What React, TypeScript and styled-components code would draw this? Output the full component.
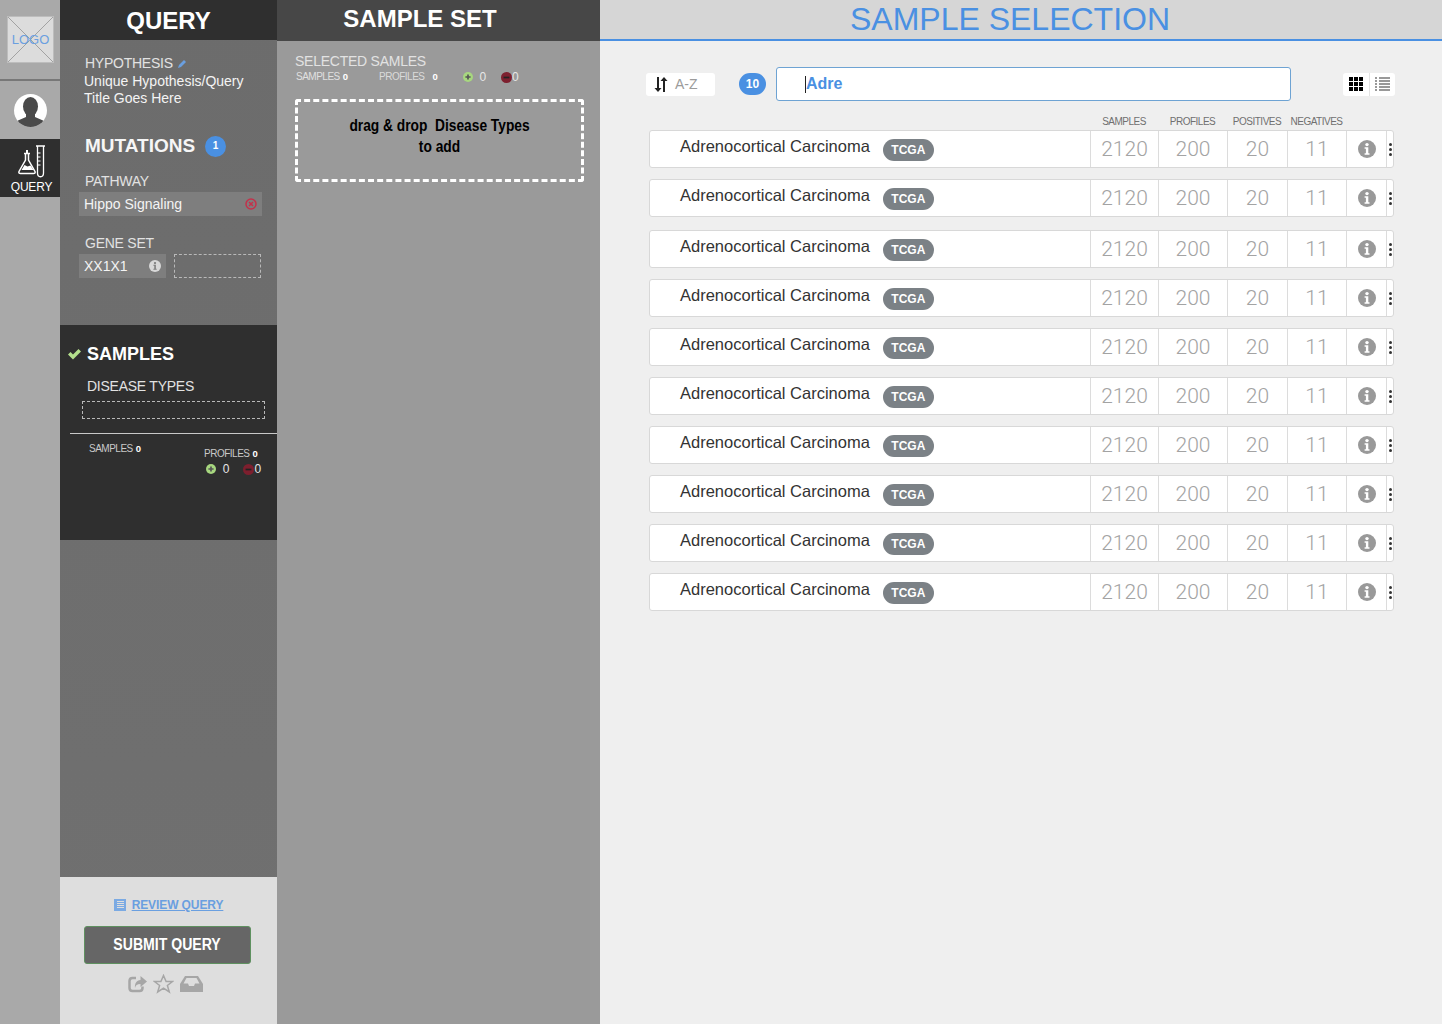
import React from "react";
import styled, { createGlobalStyle } from "styled-components";

const Global = createGlobalStyle`
  html, body { margin: 0; padding: 0; background: #efefef; }
  body { font-family: "Liberation Sans", Arial, sans-serif; overflow: hidden; }
  * { box-sizing: border-box; }
`;

const Page = styled.div`
  display: flex;
  width: 1442px;
  height: 1024px;
  overflow: hidden;
`;

/* ---------- rail ---------- */
const Rail = styled.nav`
  width: 60px;
  flex: none;
  background: #a9a9a9;
  display: flex;
  flex-direction: column;
`;
const LogoCell = styled.div`
  height: 81px;
  padding: 16px 0 0 7px;
  border-bottom: 2px solid #787878;
`;
const LogoBox = styled.div`
  position: relative;
  width: 47px;
  height: 47px;
  background: #dcdcdc;
  color: #6a9fe0;
  font-size: 13px;
  display: flex;
  align-items: center;
  justify-content: center;
  & svg { position: absolute; inset: 0; }
  & span { position: relative; }
`;
const AvatarCell = styled.div`
  height: 58px;
  display: flex;
  align-items: center;
  justify-content: center;
`;
const RailActive = styled.div`
  height: 58px;
  background: #2f2f2f;
  color: #fff;
  font-size: 12px;
  display: flex;
  flex-direction: column;
  align-items: center;
  padding-top: 6px;
  gap: 0;
  & svg { display: block; margin-left: 3px; }
  & span { line-height: 14px; margin-left: 3px; margin-top: 1px; letter-spacing: -0.2px; }
`;

/* ---------- query ---------- */
const QueryCol = styled.section`
  width: 217px;
  flex: none;
  display: flex;
  flex-direction: column;
  background: linear-gradient(#6c6c6c, #707070);
`;
const QueryHead = styled.h1`
  margin: 0;
  height: 40px;
  background: #2f2f2f;
  color: #fff;
  font-size: 24px;
  line-height: 41px;
  font-weight: 700;
  text-align: center;
  padding-right: 0;
`;
const QueryBody = styled.div`
  height: 285px;
  padding: 15px 15px 0 19px;
  color: #fff;
`;
const LightLabel = styled.div<{ $top?: number; $left?: number }>`
  font-family: "Liberation Sans", Arial, sans-serif;
  font-size: 14px;
  line-height: 16px;
  color: #e2e2e2;
  letter-spacing: -0.25px;
  margin-top: ${(p) => p.$top ?? 0}px;
  margin-left: ${(p) => p.$left ?? 0}px;
  display: flex;
  align-items: center;
  gap: 5px;
`;
const HypoTitle = styled.div`
  font-size: 14px;
  line-height: 17px;
  font-weight: 400;
  color: #f4f4f4;
  margin-top: 2px;
  margin-left: 5px;
  margin-left: 5px;
`;
const MutationRow = styled.div`
  display: flex;
  align-items: center;
  gap: 10px;
  margin: 28px 0 0 6px;
  font-size: 19px;
  line-height: 22px;
  font-weight: 700;
  color: #f6f6f6;
`;
const Count = styled.span<{ $w: number; $h: number; $size: number }>`
  width: ${(p) => p.$w}px;
  height: ${(p) => p.$h}px;
  border-radius: 12px;
  background: #4a90e2;
  color: #fff;
  font-size: ${(p) => p.$size}px;
  font-weight: 700;
  display: inline-flex;
  align-items: center;
  justify-content: center;
  flex: none;
`;
const FieldChip = styled.div<{ $w: number }>`
  width: ${(p) => p.$w}px;
  height: 24px;
  flex: none;
  background: #7e7e7e;
  padding: 0 5px;
  display: flex;
  align-items: center;
  justify-content: space-between;
  font-size: 14px;
  color: #f4f4f4;
`;
const ChipRow = styled.div<{ $top: number }>`
  display: flex;
  gap: 8px;
  margin-top: ${(p) => p.$top}px;
`;
const PathwayWrap = styled.div`
  margin-top: 3px;
`;
const Dashed = styled.div<{ $w: number; $h: number; $left?: number; $top?: number }>`
  width: ${(p) => p.$w}px;
  height: ${(p) => p.$h}px;
  border: 1px dashed #b9b9b9;
  margin-left: ${(p) => p.$left ?? 0}px;
  margin-top: ${(p) => p.$top ?? 0}px;
  flex: none;
`;
const SamplesBlock = styled.div`
  height: 215px;
  background: #2f2f2f;
  color: #fff;
  padding: 18px 0 0 7px;
`;
const SamplesTitle = styled.div`
  display: flex;
  align-items: center;
  gap: 5px;
  font-size: 18px;
  line-height: 22px;
  font-weight: 700;
`;
const Rule = styled.div`
  height: 1px;
  background: #c9c9c9;
  margin: 14px 0 0 3px;
`;
const StatRow = styled.div`
  display: flex;
  padding: 9px 0 0 22px;
`;
const Tiny = styled.span<{ $color?: string }>`
  font-size: 10px;
  line-height: 12px;
  color: ${(p) => p.$color ?? "#c9c9c9"};
  letter-spacing: -0.5px;
  white-space: nowrap;
  & b { color: #fff; margin-left: 3px; letter-spacing: 0; font-size: 9.5px; }
`;
const StatRight = styled.div`
  margin-left: 63px;
`;
const PosNeg = styled.div<{ $color?: string }>`
  display: flex;
  align-items: center;
  font-size: 12px;
  line-height: 14px;
  color: ${(p) => p.$color ?? "#e6e6e6"};
  font-weight: 400;
`;
const PosNegRow = styled.div`
  display: flex;
  margin: 1px 0 0 2px;
  gap: 14px;
`;
const QuerySpacer = styled.div`
  flex: 1;
`;
const QueryFoot = styled.div`
  height: 147px;
  background: #dedede;
  display: flex;
  flex-direction: column;
  align-items: center;
  padding: 21px 0 0 0;
`;
const ReviewLink = styled.a`
  display: flex;
  align-items: center;
  gap: 6px;
  color: #6a9fe0;
  font-size: 12px;
  font-weight: 700;
  line-height: 14px;
  letter-spacing: -0.1px;
  text-decoration: underline;
  margin-left: 0;
`;
const Submit = styled.button`
  width: 167px;
  height: 38px;
  margin: 14px 0 0 -3px;
  background: #666;
  border: 1px solid #5f9160;
  border-radius: 3px;
  color: #fff;
  font-family: "Liberation Sans", Arial, sans-serif;
  font-size: 16px;
  font-weight: 700;
  display: flex;
  align-items: center;
  justify-content: center;
  padding: 0;
  & span { display: inline-block; transform: scaleX(0.88); white-space: nowrap; }
`;
const FootIcons = styled.div`
  display: flex;
  align-items: center;
  gap: 6px;
  margin: 10px 0 0 -7px;
`;

/* ---------- sample set ---------- */
const SetCol = styled.section`
  width: 323px;
  flex: none;
  background: #9a9a9a;
`;
const SetHead = styled.h2`
  margin: 0;
  height: 41px;
  background: #474747;
  color: #fff;
  font-size: 24px;
  line-height: 38px;
  font-weight: 700;
  text-align: center;
  padding-right: 37px;
`;
const SetStats = styled.div`
  display: flex;
  align-items: center;
  padding: 1px 0 0 1px;
  height: 15px;
`;
const SetBody = styled.div`
  padding: 12px 16px 0 18px;
`;
const DropZone = styled.div`
  width: 289px;
  height: 83px;
  margin-top: 15px;
  border: 3px dashed #fff;
  border-radius: 3px;
  color: #000;
  font-size: 16px;
  line-height: 21px;
  font-weight: 700;
  text-align: center;
  padding-top: 13px;
  & span { display: block; transform: scaleX(0.86); white-space: pre; }
`;

/* ---------- selection ---------- */
const Main = styled.main`
  flex: 1;
  background: #efefef;
  display: flex;
  flex-direction: column;
`;
const MainHead = styled.h2`
  margin: 0;
  height: 41px;
  background: #d6d6d6;
  border-bottom: 2px solid #4a90e2;
  color: #4a90e2;
  font-size: 32px;
  line-height: 39px;
  font-weight: 400;
  text-align: center;
  padding-right: 22px;
`;
const Toolbar = styled.div`
  display: flex;
  align-items: center;
  height: 34px;
  margin: 26px 0 0 46px;
`;
const SortBox = styled.div`
  width: 69px;
  height: 23px;
  background: #fff;
  border-radius: 3px;
  display: flex;
  align-items: center;
  gap: 7px;
  padding-left: 8px;
  color: #9b9b9b;
  font-size: 14px;
`;
const SearchBox = styled.div`
  width: 515px;
  height: 34px;
  margin-left: 10px;
  background: #fff;
  border: 1px solid #6ea3d3;
  border-radius: 3px;
  padding-left: 28px;
  color: #4a90e2;
  font-size: 16px;
  font-weight: 700;
  line-height: 30px;
  display: flex;
  align-items: center;
  & i { width: 1px; height: 17px; background: #222; margin-right: 0; }
`;
const ViewToggle = styled.div`
  width: 52px;
  height: 23px;
  margin-left: 52px;
  background: #fff;
  border-radius: 3px;
  display: flex;
  align-items: center;
  & > div { flex: 1; display: flex; justify-content: center; align-items: center; height: 100%; }
  & > div + div { border-left: 1px solid #e3e3e3; }
`;
const ColHeads = styled.div`
  display: grid;
  grid-template-columns: 441px 68px 69px 60px 59px;
  margin: 11px 0 0 49px;
  height: 18px;
  align-items: center;
  & > span { text-align: center; font-size: 10px; color: #707070; letter-spacing: -0.5px; }
`;
const RowList = styled.div`
  margin: 0 0 0 49px;
  display: flex;
  flex-direction: column;
`;
const Row = styled.div<{ $gap: number }>`
  width: 745px;
  height: 38px;
  margin-bottom: ${(p) => p.$gap}px;
  background: #fff;
  border: 1px solid #d8d8d8;
  border-radius: 3px;
  display: grid;
  grid-template-columns: 441px 68px 69px 60px 59px 40px 1fr;
`;
const NameCell = styled.div`
  display: flex;
  align-items: flex-start;
  padding: 6px 0 0 30px;
  font-size: 16.5px;
  line-height: 19px;
  color: #333;
  letter-spacing: 0;
  border-right: 1px solid #dcdcdc;
`;
const Tag = styled.span`
  width: 51px;
  height: 22px;
  margin: 2px 0 0 13px;
  border-radius: 11px;
  background: #7b8186;
  color: #fff;
  font-size: 12px;
  font-weight: 700;
  display: flex;
  align-items: center;
  justify-content: center;
`;
const NumCell = styled.div`
  display: flex;
  align-items: center;
  justify-content: center;
  border-right: 1px solid #dcdcdc;
  color: #a3a3a3;
  font-family: "Roboto", "Liberation Sans", sans-serif;
  font-weight: 300;
  font-size: 21px;
`;
const IconCell = styled.div`
  display: flex;
  align-items: center;
  justify-content: center;
  border-right: 1px solid #dcdcdc;
  padding-left: 1px;
`;
const MenuCell = styled.div`
  display: flex;
  flex-direction: column;
  align-items: center;
  justify-content: center;
  gap: 2px;
  & i { width: 3px; height: 3px; border-radius: 50%; background: #333; display: block; }
`;

/* ---------- drawings ---------- */
const InfoIcon = ({ size, bg, fg }: { size: number; bg: string; fg: string }) => (
  <svg width={size} height={size} viewBox="0 0 18 18">
    <circle cx="9" cy="9" r="9" fill={bg} />
    <circle cx="9" cy="4.6" r="1.7" fill={fg} />
    <path d="M6.6 7.3h3.7v6h1.2v1.4H6.6v-1.4h1.3V8.7H6.6z" fill={fg} />
  </svg>
);
const PlusIcon = () => (
  <svg width="10" height="10" viewBox="0 0 10 10">
    <circle cx="5" cy="5" r="5" fill="#a7d77f" />
    <path d="M5 2.4v5.2M2.4 5h5.2" stroke="#555" strokeWidth="1.7" />
  </svg>
);
const MinusIcon = () => (
  <svg width="11" height="11" viewBox="0 0 11 11">
    <circle cx="5.5" cy="5.5" r="5.5" fill="#7d1f2e" />
    <path d="M2.6 5.5h5.8" stroke="#222" strokeWidth="1.7" />
  </svg>
);
const Flask = () => (
  <svg width="30" height="34" viewBox="0 0 30 34" fill="none" stroke="#fff">
    <path d="M7 8.5h6M8.5 9v6L2 26.5c-.5 1.3.2 2 1.5 2h13c1.300 0 2-.7 1.500-2L11.500 15V9" strokeWidth="1.500" />
    <path d="M4.500 25l3-5 3 1.500 3-1 3 4.500z" fill="#fff" stroke="none" />
    <path d="M10 5v3" strokeWidth="2" />
    <path d="M19 1h9M20.500 1v27c0 5 6 5 6 0V1" strokeWidth="1.300" />
    <path d="M20.500 8h3M20.500 12h3M20.500 16h3M20.500 20h3" strokeWidth="1" />
  </svg>
);
const names = Array.from({ length: 10 });
const gaps = [11, 13, 11, 11, 11, 11, 11, 11, 11, 0];

export default function App() {
  return (
    <Page>
      <Global />
      <Rail>
        <LogoCell>
          <LogoBox>
            <svg width="47" height="47" viewBox="0 0 47 47">
              <path d="M0 0L47 47M47 0L0 47" stroke="#a2a2a2" strokeWidth="1" />
              <rect x=".5" y=".5" width="46" height="46" fill="none" stroke="#bdbdbd" />
            </svg>
            <span>LOGO</span>
          </LogoBox>
        </LogoCell>
        <AvatarCell>
          <svg width="33" height="33" viewBox="0 0 33 33">
            <circle cx="16.500" cy="16.500" r="16.500" fill="#fff" />
            <clipPath id="avatar"><circle cx="16.500" cy="16.500" r="16.500" /></clipPath>
            <g clipPath="url(#avatar)" fill="#4a4a4a">
              <ellipse cx="16.500" cy="12.500" rx="7.500" ry="9.500" />
              <path d="M12 20h9v3l8 3.500c2 1 3 3 3 7H1c0-4 1-6 3-7l8-3.500z" />
            </g>
          </svg>
        </AvatarCell>
        <RailActive>
          <Flask />
          <span>QUERY</span>
        </RailActive>
      </Rail>

      <QueryCol>
        <QueryHead>QUERY</QueryHead>
        <QueryBody>
          <LightLabel $left={6}>
            HYPOTHESIS
            <svg width="9" height="9" viewBox="0 0 9 9"><path d="M0 9l1-3 5-5 2 2-5 5z" fill="#6a9fe0" /></svg>
          </LightLabel>
          <HypoTitle>Unique Hypothesis/Query<br />Title Goes Here</HypoTitle>
          <MutationRow>MUTATIONS <Count $w={21} $h={21} $size={10}>1</Count></MutationRow>
          <LightLabel $top={16} $left={6}>PATHWAY</LightLabel>
          <PathwayWrap>
            <FieldChip $w={183}>
              Hippo Signaling
              <svg width="12" height="12" viewBox="0 0 12 12" fill="none" stroke="#c4314b" strokeWidth="1.500">
                <circle cx="6" cy="6" r="5" />
                <path d="M4 4l4 4M8 4l-4 4" />
              </svg>
            </FieldChip>
          </PathwayWrap>
          <LightLabel $top={19} $left={6}>GENE SET</LightLabel>
          <ChipRow $top={3}>
            <FieldChip $w={87}>
              <span>XX1X1</span>
              <InfoIcon size={12} bg="#d8d8d8" fg="#7e7e7e" />
            </FieldChip>
            <Dashed $w={87} $h={24} />
          </ChipRow>
        </QueryBody>
        <SamplesBlock>
          <SamplesTitle>
            <svg width="15" height="12" viewBox="0 0 15 12"><path d="M1 6.500l2.500-2.500 2.500 2.500L11.500 1 14 3.500 6 11.500z" fill="#b4e08c" /></svg>
            SAMPLES
          </SamplesTitle>
          <LightLabel $top={13} $left={20}>DISEASE TYPES</LightLabel>
          <Dashed $w={183} $h={18} $left={15} $top={7} />
          <Rule />
          <StatRow>
            <Tiny>SAMPLES<b>0</b></Tiny>
            <StatRight>
              <Tiny>PROFILES<b>0</b></Tiny>
              <PosNegRow>
                <PosNeg><PlusIcon />&nbsp;&nbsp;0</PosNeg>
                <PosNeg><MinusIcon />0</PosNeg>
              </PosNegRow>
            </StatRight>
          </StatRow>
        </SamplesBlock>
        <QuerySpacer />
        <QueryFoot>
          <ReviewLink>
            <svg width="12" height="12" viewBox="0 0 12 12">
              <rect width="12" height="12" fill="#7baae3" />
              <path d="M3 2.500h7M3 4.500h7M3 6.500h7M3 8.500h7" stroke="#dedede" strokeWidth="1" />
            </svg>
            REVIEW QUERY
          </ReviewLink>
          <Submit><span>SUBMIT QUERY</span></Submit>
          <FootIcons>
            <svg width="19" height="18" viewBox="0 0 19 18">
              <path d="M8 3H4.500C2.500 3 1.500 4.200 1.500 6v7c0 1.800 1 3 3 3h7c1.800 0 3-1.200 3-3v-1.500" fill="none" stroke="#a6a6a6" strokeWidth="2.500" />
              <path d="M12.500 1L19 6.500 12.500 12V9C9 9 7.500 10.500 7 13c-.5-4.500 1.500-7.500 5.500-8z" fill="#a6a6a6" />
            </svg>
            <svg width="21" height="20" viewBox="0 0 21 20">
              <path d="M10.500 1.500l2.600 6h6.400l-5.100 4 1.900 6.500-5.800-3.800L4.700 18l1.900-6.500-5.100-4h6.400z" fill="none" stroke="#a6a6a6" strokeWidth="1.500" />
            </svg>
            <svg width="23" height="16" viewBox="0 0 23 16">
              <path d="M5 0h13l5 8v8H0V8zM6.500 2L3.500 7.500H8l1 2.500h5l1-2.500h4.500L16.500 2z" fill="#a6a6a6" fillRule="evenodd" />
            </svg>
          </FootIcons>
        </QueryFoot>
      </QueryCol>

      <SetCol>
        <SetHead>SAMPLE SET</SetHead>
        <SetBody>
          <LightLabel>SELECTED SAMLES</LightLabel>
          <SetStats>
            <Tiny $color="#e0e0e0">SAMPLES<b>0</b></Tiny>
            <Tiny $color="#dadada" style={{ marginLeft: 31 }}>PROFILES <b>&nbsp;0</b></Tiny>
            <PosNeg style={{ marginLeft: 25 }}><PlusIcon />&nbsp;&nbsp;0</PosNeg>
            <PosNeg style={{ marginLeft: 15 }}><MinusIcon />0</PosNeg>
          </SetStats>
          <DropZone>
            <span>{"drag & drop  Disease Types"}</span>
            <span>to add</span>
          </DropZone>
        </SetBody>
      </SetCol>

      <Main>
        <MainHead>SAMPLE SELECTION</MainHead>
        <Toolbar>
          <SortBox>
            <svg width="14" height="15" viewBox="0 0 14 15" fill="#222">
              <path d="M3 0h2v11h2.500L4 15 .5 11H3z" />
              <path d="M9 15h2V4h2.500L10 0 6.500 4H9z" />
            </svg>
            A-Z
          </SortBox>
          <Count $w={27} $h={22} $size={12} style={{ marginLeft: 24 }}>10</Count>
          <SearchBox><i />Adre</SearchBox>
          <ViewToggle>
            <div>
              <svg width="14" height="14" viewBox="0 0 14 14" fill="#000">
                {[0, 5, 10].flatMap((x) => [0, 5, 10].map((y) => <rect key={`${x}-${y}`} x={x} y={y} width="4" height="4" />))}
              </svg>
            </div>
            <div>
              <svg width="15" height="14" viewBox="0 0 15 14" fill="#999">
                {[0, 3, 6, 9, 12].map((y) => (
                  <React.Fragment key={y}>
                    <rect x="0" y={y} width="2" height="2" />
                    <rect x="4" y={y} width="11" height="2" />
                  </React.Fragment>
                ))}
              </svg>
            </div>
          </ViewToggle>
        </Toolbar>
        <ColHeads>
          <span />
          <span>SAMPLES</span>
          <span>PROFILES</span>
          <span>POSITIVES</span>
          <span>NEGATIVES</span>
        </ColHeads>
        <RowList>
          {names.map((_, i) => (
            <Row key={i} $gap={gaps[i]}>
              <NameCell>Adrenocortical Carcinoma<Tag>TCGA</Tag></NameCell>
              <NumCell>2120</NumCell>
              <NumCell>200</NumCell>
              <NumCell>20</NumCell>
              <NumCell>11</NumCell>
              <IconCell><InfoIcon size={18} bg="#999" fg="#fff" /></IconCell>
              <MenuCell><i /><i /><i /></MenuCell>
            </Row>
          ))}
        </RowList>
      </Main>
    </Page>
  );
}
